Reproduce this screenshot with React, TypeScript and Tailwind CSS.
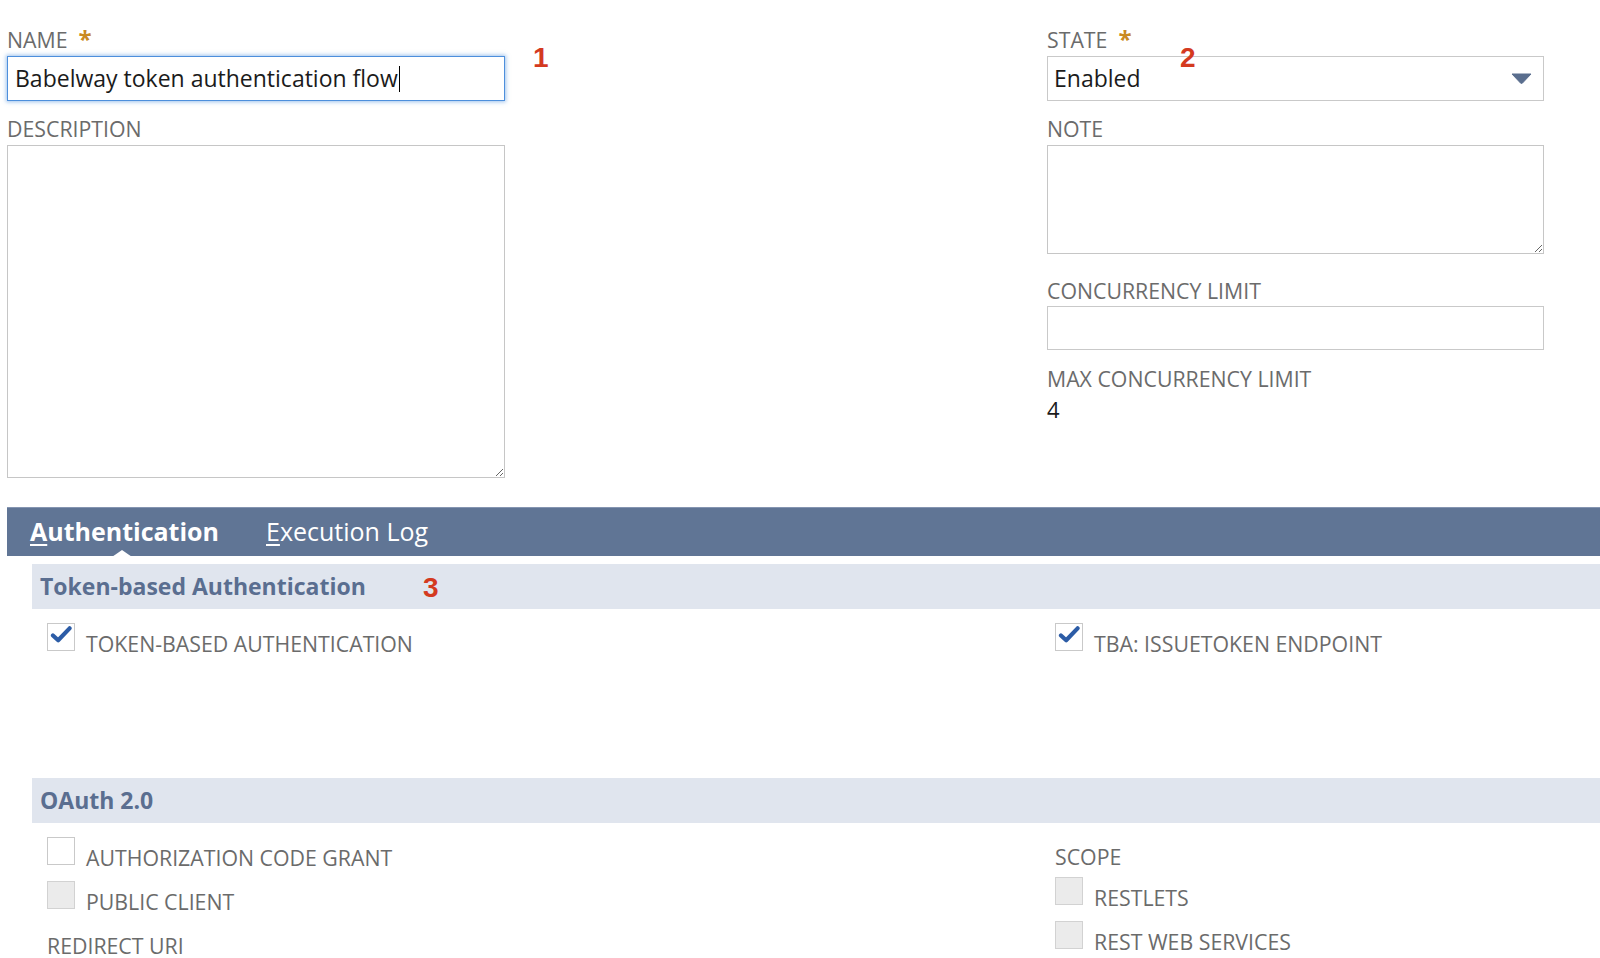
import React from "react";

const Label = ({ text, required, className = "" }: { text: string; required?: boolean; className?: string }) => (
  <div className={`text-[21.3px] leading-[24px] text-[#6b6b6b] ${className}`}>
    {text}
    {required ? <span className="ml-[11px] text-[24px] font-bold text-[#c98a22]">*</span> : null}
  </div>
);

const Marker = ({ n, className }: { n: string; className: string }) => (
  <span className={`absolute font-['Liberation_Sans',Arial,sans-serif] text-[28px] leading-none font-bold text-[#d43a1f] ${className}`}>{n}</span>
);

const Check = ({ state }: { state: "checked" | "empty" | "disabled" }) => (
  <div
    className={`relative h-[28px] w-[28px] shrink-0 border ${
      state === "disabled" ? "border-[#d2d2d2] bg-[#ebebeb]" : "border-[#c9c9c9] bg-white"
    }`}
  >
    {state === "checked" ? (
      <svg viewBox="0 0 24 20" className="absolute left-[2px] top-[1px] h-[19px] w-[23px]">
        <path d="M3 11 L8.5 16 L20.5 3.5" fill="none" stroke="#2c5ca6" strokeWidth="4.4" strokeLinecap="round" strokeLinejoin="round" />
      </svg>
    ) : null}
  </div>
);

const CheckRow = ({ state, text, className = "" }: { state: "checked" | "empty" | "disabled"; text: string; className?: string }) => (
  <div className={`flex items-start ${className}`}>
    <Check state={state} />
    <span className="ml-[11px] mt-[9px] text-[21.3px] leading-[24px] text-[#6b6b6b]">{text}</span>
  </div>
);

const Band = ({ title, children }: { title: string; children?: React.ReactNode }) => (
  <div className="relative flex h-[45px] items-center bg-[#e0e5ee] pl-[8px]">
    <span className="text-[23px] font-bold text-[#5a6e90]">{title}</span>
    {children}
  </div>
);

export default function App() {
  return (
    <div className="min-h-screen overflow-hidden bg-white font-['Open_Sans',sans-serif]">
      <div className="flex pl-[7px] pt-[27px]">
        <div className="w-[498px]">
          <Label text="NAME" required />
          <div className="relative mt-[4px]">
            <div className="flex h-[45px] items-center border border-[#4d8fdc] bg-white pl-[7px] shadow-[0_0_4px_1px_rgba(77,143,220,0.55)]">
              <span className="text-[23px] text-[#1b1b1b]">Babelway token authentication flow</span>
              <span className="ml-px h-[26px] w-px bg-black" />
            </div>
            <Marker n="1" className="left-[526px] top-[-12px]" />
          </div>
          <Label text="DESCRIPTION" className="mt-[16px]" />
          <textarea readOnly className="mt-[4px] block h-[333px] w-full border border-[#c6c6c6] bg-white outline-none" />
        </div>

        <div className="ml-[542px] w-[497px]">
          <Label text="STATE" required />
          <div className="relative mt-[4px]">
            <div className="flex h-[45px] items-center justify-between border border-[#c9c9c9] bg-white pl-[6px] pr-[11px]">
              <span className="text-[23px] text-[#1b1b1b]">Enabled</span>
              <svg viewBox="0 0 21 11" className="h-[11px] w-[21px]">
                <path d="M1 1 L20 1 L11.5 10 Q10.5 11 9.5 10 Z" fill="#5a6e8e" stroke="#5a6e8e" strokeLinejoin="round" />
              </svg>
            </div>
            <Marker n="2" className="left-[133px] top-[-12px]" />
          </div>
          <Label text="NOTE" className="mt-[16px]" />
          <textarea readOnly className="mt-[4px] block h-[109px] w-full border border-[#c6c6c6] bg-white outline-none" />
          <Label text="CONCURRENCY LIMIT" className="mt-[25px]" />
          <div className="mt-[3px] h-[44px] border border-[#c9c9c9] bg-white" />
          <Label text="MAX CONCURRENCY LIMIT" className="mt-[17px]" />
          <div className="mt-[6px] text-[22px] leading-[24px] text-[#1b1b1b]">4</div>
        </div>
      </div>

      <div className="ml-[7px] mt-[29px] flex h-[49px] items-center border-t border-[#8595b1] bg-[#607595] pl-[23px]">
        <div className="relative text-[25px] font-bold text-white">
          <span className="underline decoration-2 underline-offset-[3px]">A</span>uthentication
          <span className="absolute left-[79px] top-[37px] h-0 w-0 border-x-[13px] border-b-[9px] border-x-transparent border-b-white" />
        </div>
        <div className="ml-[47px] text-[25px] text-white">
          <span className="underline decoration-2 underline-offset-[3px]">E</span>xecution Log
        </div>
      </div>

      <div className="ml-[32px] mt-[8px]">
        <Band title="Token-based Authentication">
          <Marker n="3" className="left-[391px] top-[10px]" />
        </Band>
        <div className="grid h-[169px] grid-cols-[1008px_1fr] pl-[15px] pt-[14px]">
          <CheckRow state="checked" text="TOKEN-BASED AUTHENTICATION" />
          <CheckRow state="checked" text="TBA: ISSUETOKEN ENDPOINT" />
        </div>

        <Band title="OAuth 2.0" />
        <div className="grid grid-cols-[1008px_1fr] pl-[15px]">
          <div className="pt-[14px]">
            <CheckRow state="empty" text="AUTHORIZATION CODE GRANT" />
            <CheckRow state="disabled" text="PUBLIC CLIENT" className="mt-[11px]" />
            <Label text="REDIRECT URI" className="mt-[20px]" />
          </div>
          <div className="pt-[22px]">
            <Label text="SCOPE" />
            <CheckRow state="disabled" text="RESTLETS" className="mt-[8px]" />
            <CheckRow state="disabled" text="REST WEB SERVICES" className="mt-[11px]" />
          </div>
        </div>
      </div>
    </div>
  );
}
